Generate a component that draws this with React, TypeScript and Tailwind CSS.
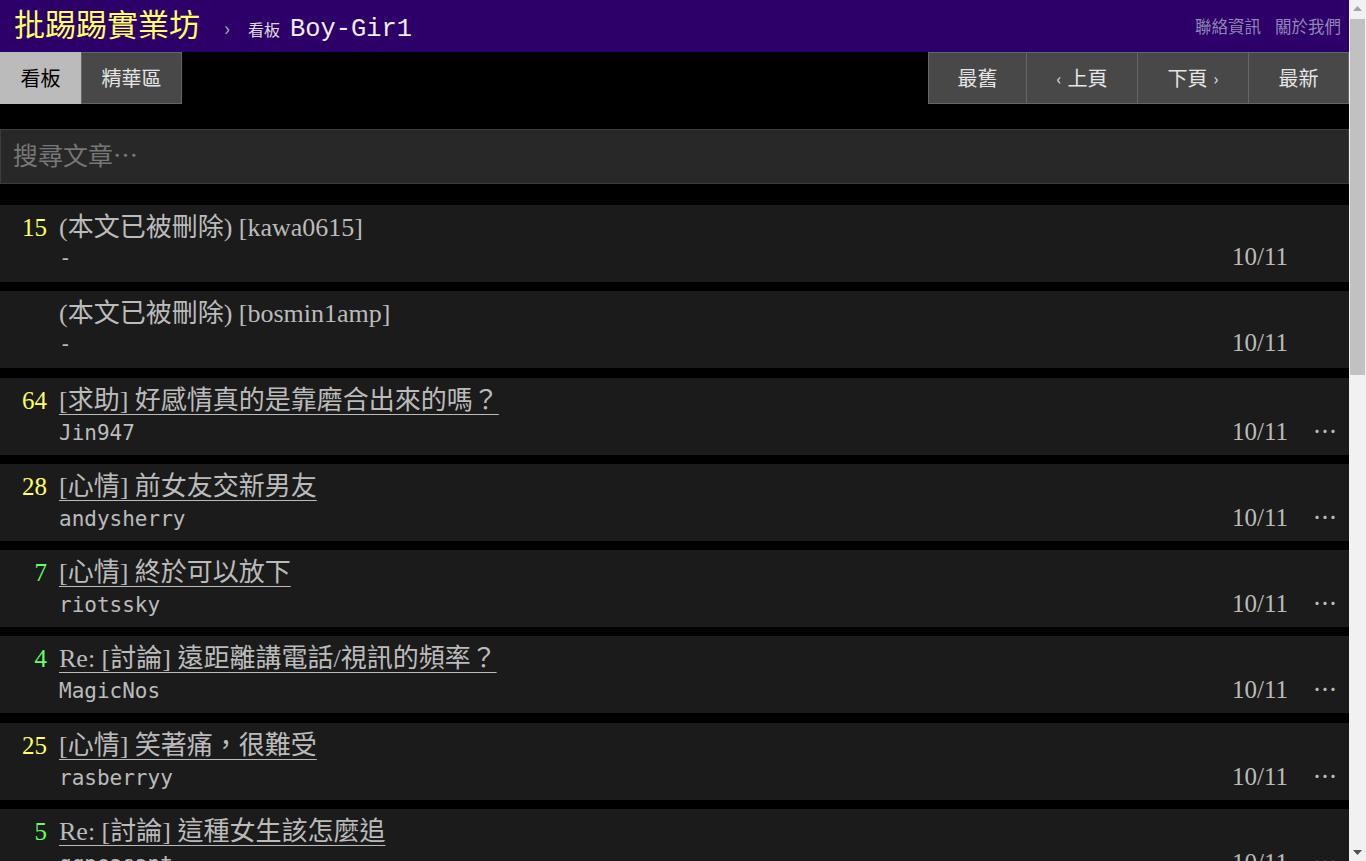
import React from "react";

type Row = {
  n: string;
  color: string;
  title: string;
  author: string;
  date: string;
  deleted?: boolean;
};

const rows: Row[] = [
  { n: "15", color: "text-[#ffff66]", title: "(本文已被刪除) [kawa0615]", author: "-", date: "10/11", deleted: true },
  { n: "", color: "text-[#ffff66]", title: "(本文已被刪除) [bosmin1amp]", author: "-", date: "10/11", deleted: true },
  { n: "64", color: "text-[#ffff66]", title: "[求助] 好感情真的是靠磨合出來的嗎？", author: "Jin947", date: "10/11" },
  { n: "28", color: "text-[#ffff66]", title: "[心情] 前女友交新男友", author: "andysherry", date: "10/11" },
  { n: "7", color: "text-[#66ff66]", title: "[心情] 終於可以放下", author: "riotssky", date: "10/11" },
  { n: "4", color: "text-[#66ff66]", title: "Re: [討論] 遠距離講電話/視訊的頻率？", author: "MagicNos", date: "10/11" },
  { n: "25", color: "text-[#ffff66]", title: "[心情] 笑著痛，很難受", author: "rasberryy", date: "10/11" },
  { n: "5", color: "text-[#66ff66]", title: "Re: [討論] 這種女生該怎麼追", author: "ggpeasant", date: "10/11" },
  { n: "12", color: "text-[#ffff66]", title: "[討論] 交往多久見家長比較好？", author: "lovelyday", date: "10/11" },
  { n: "3", color: "text-[#66ff66]", title: "[分享] 曖昧期的小確幸", author: "tsaiwen", date: "10/11" },
  { n: "9", color: "text-[#66ff66]", title: "[求助] 女友總是不回訊息", author: "kevin0923", date: "10/11" },
  { n: "18", color: "text-[#ffff66]", title: "Re: [心情] 前女友交新男友", author: "moonlight", date: "10/11" },
];

function Dots() {
  return (
    <span lang="zh-TW" className="font-['Noto_Sans_CJK_TC',sans-serif] text-[24px] text-[#bbbbbb]">
      ⋯
    </span>
  );
}

function Scrollbar() {
  return (
    <div className="flex w-[17px] shrink-0 flex-col bg-[#f1f1f1]">
      <div className="flex h-[17px] items-center justify-center">
        <svg width="9" height="5" viewBox="0 0 9 5">
          <path d="M0 5 L4.5 0 L9 5 Z" fill="#a3a3a3" />
        </svg>
      </div>
      <div className="ml-[1px] mr-[1px] mt-[2px] h-[356px] bg-[#c1c1c1]" />
      <div className="flex-1" />
      <div className="flex h-[17px] items-center justify-center">
        <svg width="9" height="5" viewBox="0 0 9 5">
          <path d="M0 0 L4.5 5 L9 0 Z" fill="#505050" />
        </svg>
      </div>
    </div>
  );
}

export default function App() {
  return (
    <div className="flex h-screen overflow-hidden">
      <div
        lang="zh-TW"
        className="min-w-0 flex-1 overflow-hidden bg-black font-['Liberation_Serif','Noto_Sans_CJK_TC',serif] text-[#bbbbbb]"
      >
        <header className="flex h-[52px] items-center justify-between bg-[#2c0068] pl-[14px] pr-[8px]">
          <div className="flex items-baseline">
            <span className="font-['Noto_Sans_CJK_TC',sans-serif] text-[31px] leading-[40px] text-[#ffff66]">
              批踢踢實業坊
            </span>
            <span className="ml-[24px] font-['Noto_Sans_CJK_TC',sans-serif] text-[20px] text-[#aaaaaa]">›</span>
            <span className="ml-[18px] font-['Noto_Sans_CJK_TC',sans-serif] text-[16px] text-[#dddddd]">看板</span>
            <span className="ml-[10px] font-['Liberation_Mono',monospace] text-[25.4px] text-[#eeeeee]">
              Boy-Gir1
            </span>
          </div>
          <div className="flex gap-[14px] font-['Noto_Sans_CJK_TC',sans-serif] text-[16.5px] text-[#9186b8]">
            <span>聯絡資訊</span>
            <span>關於我們</span>
          </div>
        </header>

        <nav className="flex h-[52px] justify-between font-['Noto_Sans_CJK_TC',sans-serif] text-[20px]">
          <div className="flex">
            <div className="flex w-[81px] items-center justify-center border border-[#bbbbbb] bg-[#bbbbbb] text-black">
              看板
            </div>
            <div className="flex w-[101px] items-center justify-center border border-[#666666] bg-[#484848] text-[#e6e6e6]">
              精華區
            </div>
          </div>
          <div className="flex text-[#e6e6e6]">
            <div className="flex w-[99px] items-center justify-center border border-[#666666] bg-[#484848]">最舊</div>
            <div className="flex w-[111px] items-center justify-center border-y border-r border-[#666666] bg-[#484848]">
              <span className="mr-[6px] text-[16px]">‹</span>上頁
            </div>
            <div className="flex w-[111px] items-center justify-center border-y border-r border-[#666666] bg-[#484848]">
              下頁<span className="ml-[6px] text-[16px]">›</span>
            </div>
            <div className="flex w-[100px] items-center justify-center border-y border-r border-[#666666] bg-[#484848]">
              最新
            </div>
          </div>
        </nav>

        <div className="mt-[25px] flex h-[55px] items-center border border-[#3c3c3c] bg-[#282828] px-[12px] pb-[3px]">
          <span className="font-['Noto_Sans_CJK_TC',sans-serif] text-[25px] text-[#777777]">搜尋文章⋯</span>
        </div>

        <div className="mt-[21px] flex flex-col gap-[9.3px] pb-[40px]">
          {rows.map((r, i) => (
            <div key={i} className="flex h-[77px] shrink-0 bg-[#1b1b1b]">
              <div className={`w-[47px] pt-[7px] text-right text-[25px] leading-[32px] ${r.color}`}>{r.n}</div>
              <div className="ml-[12px] flex flex-1 flex-col pt-[7px]">
                <div className="h-[32px] whitespace-nowrap text-[26px] leading-[32px]">
                  {r.deleted ? (
                    <span className="text-[#bbbbbb]">{r.title}</span>
                  ) : (
                    <span className="text-[#bbbbbb] underline decoration-1 underline-offset-[5px]">{r.title}</span>
                  )}
                </div>
                <div className="-mt-[3px] flex h-[32px] items-baseline leading-[32px]">
                  <span className="flex-1 font-['DejaVu_Sans_Mono',monospace] text-[21px] text-[#bbbbbb]">
                    {r.author}
                  </span>
                  <span className="text-[25px] text-[#bbbbbb]">{r.date}</span>
                  <span className="ml-[13px] flex w-[48px] justify-center">{r.deleted ? null : <Dots />}</span>
                </div>
              </div>
            </div>
          ))}
        </div>
      </div>
      <Scrollbar />
    </div>
  );
}
